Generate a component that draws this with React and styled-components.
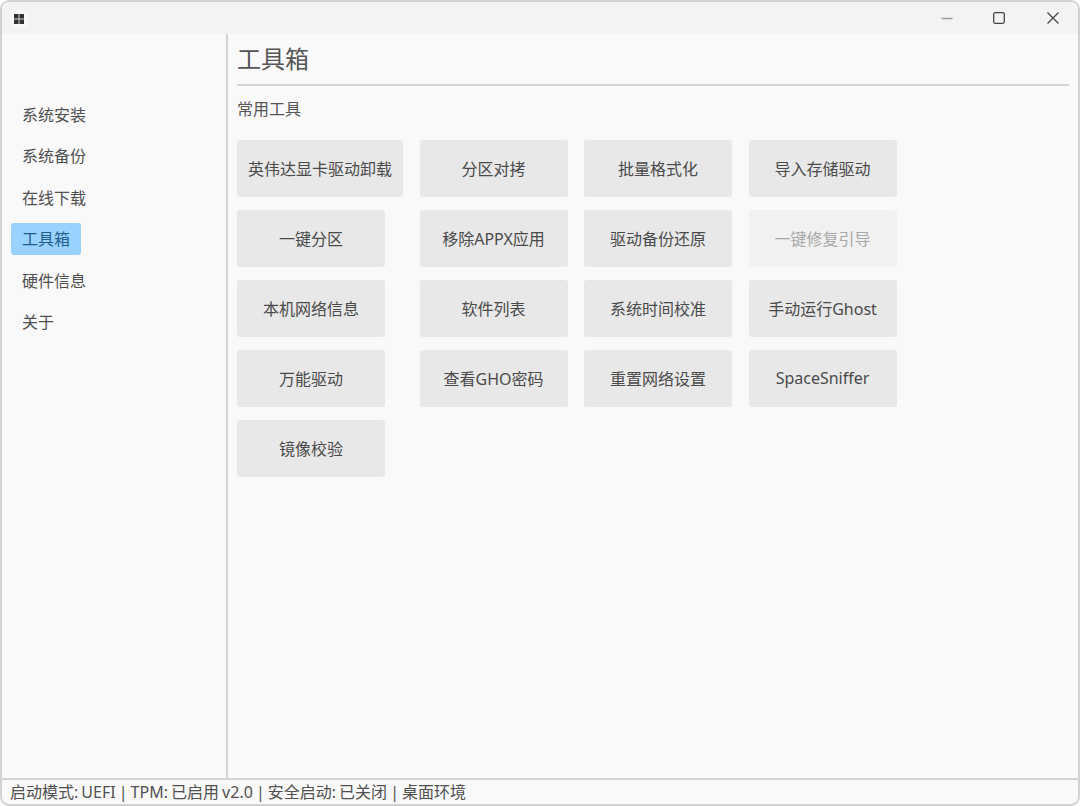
import React from "react";
import styled, { createGlobalStyle } from "styled-components";

const Global = createGlobalStyle`
  html, body { margin: 0; padding: 0; background: #fff; }
  #root { width: 1080px; height: 806px; }
  * { box-sizing: border-box; }
`;

const Win = styled.div`
  width: 1080px; height: 806px;
  display: flex; flex-direction: column;
  background: #f9f9f9;
  border: 2px solid #d2d2d2;
  border-radius: 9px;
  overflow: hidden;
  font-family: "Noto Sans", "Noto Sans CJK SC", sans-serif;
  color: #505050;
`;
const TitleBar = styled.div`
  height: 32px; flex: none;
  display: flex; align-items: center; justify-content: space-between;
  background: #f3f3f3;
`;
const AppIcon = styled.div`
  margin-left: 8px; margin-top: 2px;
  width: 18px; height: 18px;
  display: flex; align-items: center; justify-content: center;
  background: #f8f8f8;
  border-radius: 4px;
`;
const Controls = styled.div`
  display: flex; align-items: center; height: 100%;
`;
const Ctl = styled.div`
  width: ${p => p.$w}px; height: 100%;
  display: flex; align-items: center; justify-content: center;
`;
const Body = styled.div`
  flex: 1; min-height: 0; display: flex;
`;
const Sidebar = styled.nav`
  width: 226px; flex: none;
  border-right: 2px solid #d4d4d4;
  padding: 64.5px 0 0 9px;
  display: flex; flex-direction: column; gap: 9.5px;
  align-items: flex-start;
`;
const NavItem = styled.div`
  height: 32px; padding: 0 11px;
  display: flex; align-items: center;
  font-size: 16px; line-height: 30px;
  border-radius: 3px;
  color: ${p => (p.$active ? "#1f5f8a" : "#505050")};
  background: ${p => (p.$active ? "#99d1ff" : "transparent")};
`;
const Main = styled.main`
  flex: 1; min-width: 0;
  padding: 0 9px 0 9px;
  display: flex; flex-direction: column;
`;
const Title = styled.h1`
  margin: 0; height: 52px;
  font-size: 24px; font-weight: 400; line-height: 50px;
  color: #555;
  border-bottom: 2px solid #d4d4d4;
`;
const Section = styled.h2`
  margin: 11px 0 0; height: 26px;
  font-size: 16px; font-weight: 400; line-height: 24px;
  color: #555;
`;
const Grid = styled.div`
  margin-top: 17px;
  display: grid;
  grid-template-columns: 166px 148px 148px 148px;
  grid-auto-rows: 56.5px;
  column-gap: 16.5px; row-gap: 13.5px;
  justify-items: start;
  justify-content: start;
`;
const Tool = styled.button`
  height: 56.5px;
  padding: 0 11px 1px 11px;
  border: 0; border-radius: 3px;
  font-family: inherit; font-size: 16px;
  white-space: nowrap;
  background: ${p => (p.disabled ? "#f1f1f1" : "#e8e8e8")};
  color: ${p => (p.disabled ? "#a8a8a8" : "#4a4a4a")};
  width: ${p => (p.$wide ? "166px" : "148px")};
`;
const Status = styled.footer`
  height: 26px; flex: none;
  border-top: 2px solid #d4d4d4;
  padding-left: 8px;
  font-size: 16px; line-height: 24px;
  word-spacing: -1.1px;
  color: #505050;
  white-space: nowrap;
`;

const tools = [
  "英伟达显卡驱动卸载", "分区对拷", "批量格式化", "导入存储驱动",
  "一键分区", "移除APPX应用", "驱动备份还原", "一键修复引导",
  "本机网络信息", "软件列表", "系统时间校准", "手动运行Ghost",
  "万能驱动", "查看GHO密码", "重置网络设置", "SpaceSniffer",
  "镜像校验",
];
const nav = ["系统安装", "系统备份", "在线下载", "工具箱", "硬件信息", "关于"];

export default function App() {
  return (
    <>
      <Global />
      <Win>
        <TitleBar>
          <AppIcon>
            <svg width="10" height="10" viewBox="0 0 10 10" fill="#333">
              <rect x="0" y="0" width="4.6" height="4.6" />
              <rect x="5.4" y="0" width="4.6" height="4.6" />
              <rect x="0" y="5.4" width="4.6" height="4.6" />
              <rect x="5.4" y="5.4" width="4.6" height="4.6" />
            </svg>
          </AppIcon>
          <Controls>
            <Ctl $w={47}>
              <svg width="12" height="12" viewBox="0 0 12 12">
                <path d="M0.5 6.5H11.5" stroke="#9a9a9a" strokeWidth="1.4" />
              </svg>
            </Ctl>
            <Ctl $w={57}>
              <svg width="12" height="12" viewBox="0 0 12 12" fill="none">
                <rect x="0.7" y="0.7" width="10.6" height="10.6" rx="1.5" stroke="#444" strokeWidth="1.3" />
              </svg>
            </Ctl>
            <Ctl $w={51}>
              <svg width="12" height="12" viewBox="0 0 12 12" fill="none">
                <path d="M0.5 0.5L11.5 11.5M11.5 0.5L0.5 11.5" stroke="#444" strokeWidth="1.2" />
              </svg>
            </Ctl>
          </Controls>
        </TitleBar>
        <Body>
          <Sidebar>
            {nav.map(n => (
              <NavItem key={n} $active={n === "工具箱"}>{n}</NavItem>
            ))}
          </Sidebar>
          <Main>
            <Title>工具箱</Title>
            <Section>常用工具</Section>
            <Grid>
              {tools.map((t, i) => (
                <Tool key={t} $wide={i === 0} disabled={t === "一键修复引导"}>{t}</Tool>
              ))}
            </Grid>
          </Main>
        </Body>
        <Status>启动模式: UEFI | TPM: 已启用 v2.0 | 安全启动: 已关闭 | 桌面环境</Status>
      </Win>
    </>
  );
}
